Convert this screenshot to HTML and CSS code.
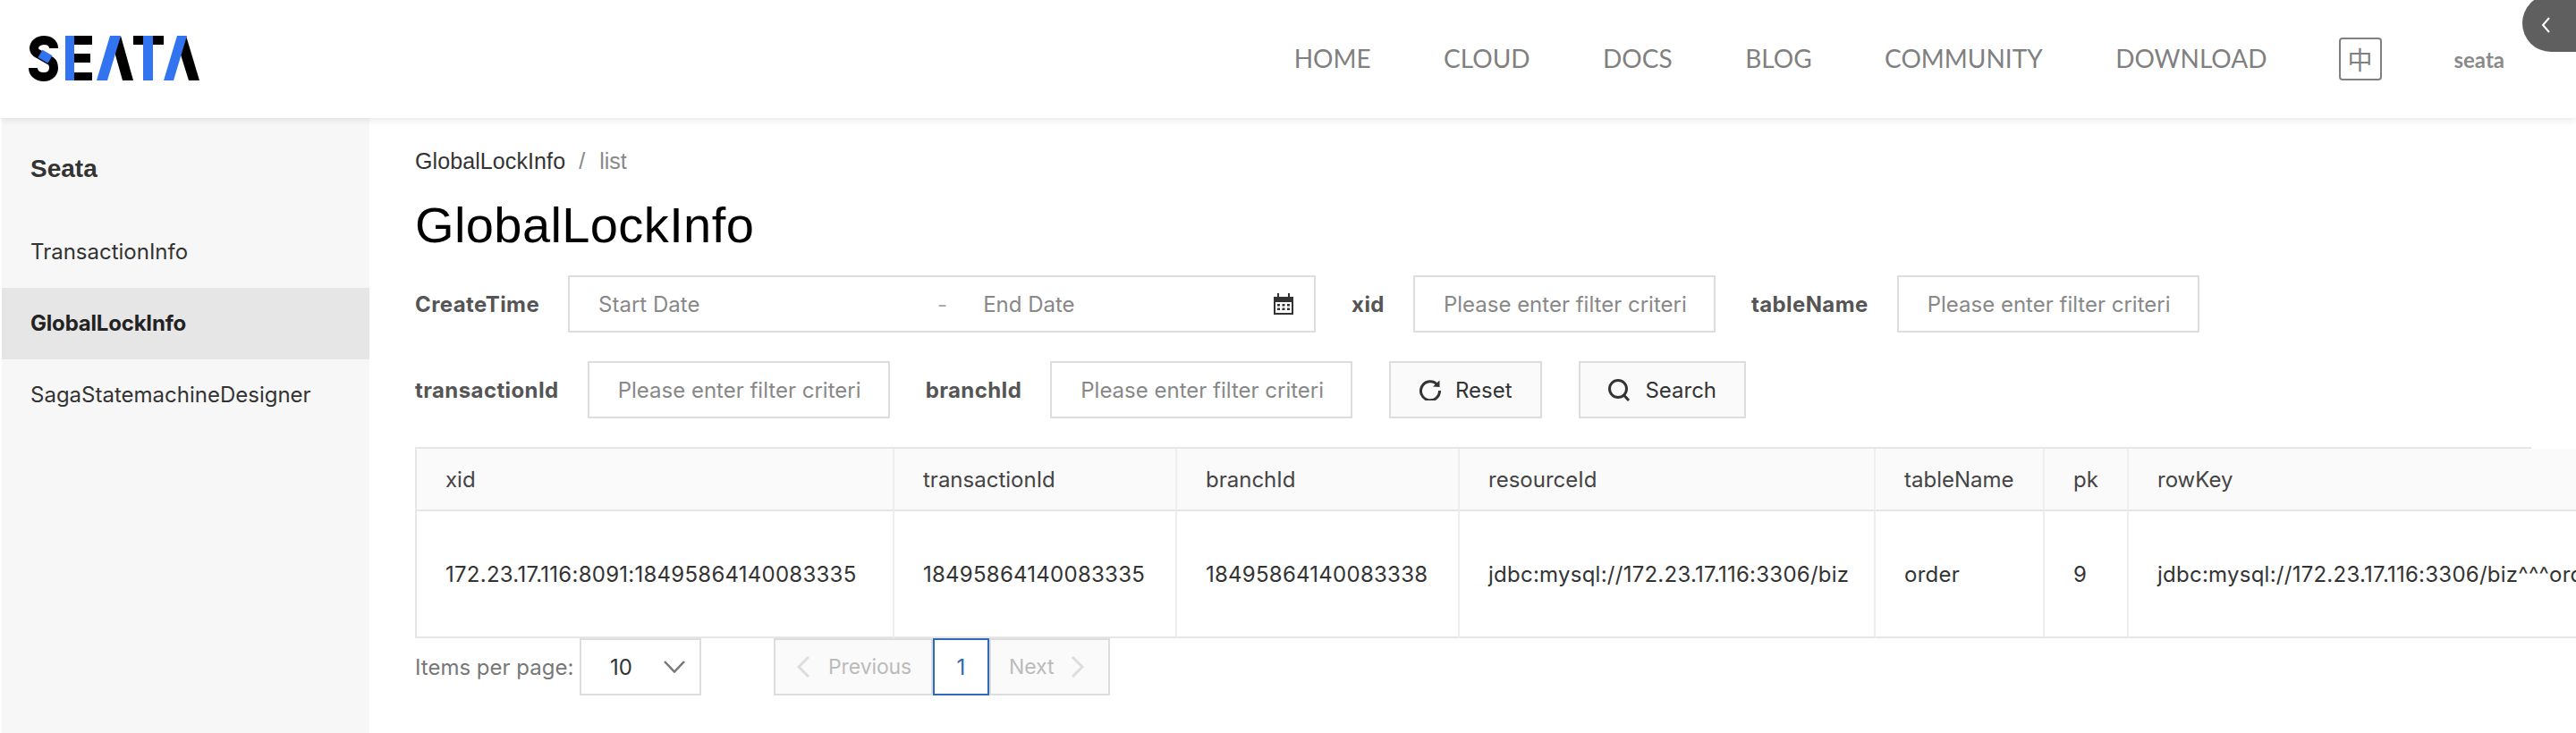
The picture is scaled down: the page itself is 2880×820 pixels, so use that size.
FILE: index.html
```html
<!DOCTYPE html>
<html lang="en">
<head>
	<meta charset="UTF-8">
	<title>Seata</title>
	<link rel="stylesheet" href="styles.css">
</head>
<body>
	<header class="header">
		<a class="logo" href="javascript:;" aria-label="Seata">
			<svg width="192" height="51" viewBox="0 0 192 51">
				<path class="logo-s" d="M28 14C28 8 23 5 17 5C11 5 6 9 6 14C6 17 8 19 11 20.5L25 28.500C27 30 28 32 28 36C28 42 23 46 17 46C10 46 5 42 5 36"/>
				<path class="logo-blue-line" d="M13 20L24 26.500"/>
				<path class="logo-black" d="M51 0H71V10H51ZM51 20H69V30H51ZM51 41H71V50H51Z"/>
				<path class="logo-blue" d="M41 0H51V50H41Z"/>
				<path class="logo-black" d="M103 0L117 50H105L96 18Z"/>
				<path class="logo-blue" d="M91 0H103L88 50H76Z"/>
				<path class="logo-black" d="M117 0H151V10H117Z"/>
				<path class="logo-blue" d="M128 0H139V50H128Z"/>
				<path class="logo-black" d="M176 0L191 50H179L169 18Z"/>
				<path class="logo-blue" d="M166 0H177L162 50H151Z"/>
			</svg>
		</a>
		<nav class="nav">
			<a href="javascript:;">HOME</a>
			<a href="javascript:;">CLOUD</a>
			<a href="javascript:;">DOCS</a>
			<a href="javascript:;">BLOG</a>
			<a href="javascript:;">COMMUNITY</a>
			<a href="javascript:;">DOWNLOAD</a>
		</nav>
		<span class="lang">中</span>
		<span class="user">seata</span>
		<div class="toggle">
			<svg width="10" height="18" viewBox="0 0 10 18"><path d="M9 1L2 9L9 17"/></svg>
		</div>
	</header>
	<div class="layout">
		<aside class="sidebar">
			<h2 class="side-title">Seata</h2>
			<ul class="menu">
				<li>TransactionInfo</li>
				<li class="active">GlobalLockInfo</li>
				<li>SagaStatemachineDesigner</li>
			</ul>
		</aside>
		<main class="main">
			<div class="crumb"><a href="javascript:;">GlobalLockInfo</a><i>/</i><span>list</span></div>
			<h1 class="title">GlobalLockInfo</h1>
			<div class="form-row">
				<label>CreateTime</label>
				<div class="box date-box">
					<span class="date-start">Start Date</span>
					<span class="date-sep">-</span>
					<span class="date-end">End Date</span>
					<svg class="calendar" width="24" height="24" viewBox="0 0 24 24">
						<path class="cal-body" d="M1 4H23V24H1ZM3 10V22H21V10Z"/>
						<path class="cal-body" d="M5 0H7V4H5ZM17 0H19V4H17ZM5 12H8V14.500H5ZM10.500 12H13.500V14.500H10.500ZM16 12H19V14.500H16ZM5 16.500H8V19H5ZM10.500 16.500H13.500V19H10.500ZM16 16.500H19V19H16Z"/>
					</svg>
				</div>
				<label>xid</label>
				<div class="box">Please enter filter criteri</div>
				<label>tableName</label>
				<div class="box">Please enter filter criteri</div>
			</div>
			<div class="form-row">
				<label>transactionId</label>
				<div class="box">Please enter filter criteri</div>
				<label>branchId</label>
				<div class="box">Please enter filter criteri</div>
				<button class="btn btn-reset">
					<svg width="24" height="24" viewBox="0 0 24 24"><path class="ico" d="M20 6.500A10.500 10.500 0 1 0 22.500 13"/><path class="ico-fill" d="M15 8.500L22.500 9V1.500Z"/></svg>
					Reset
				</button>
				<button class="btn btn-search">
					<svg width="25" height="25" viewBox="0 0 25 25"><circle class="ico" cx="11" cy="11" r="9.500"/><path class="ico" d="M17.500 18L23 24"/></svg>
					Search
				</button>
			</div>
			<div class="table-wrap">
				<table class="table">
					<colgroup>
						<col class="c-xid"><col class="c-id"><col class="c-id"><col class="c-res"><col class="c-name"><col class="c-pk"><col class="c-key">
					</colgroup>
					<thead>
						<tr>
							<th>xid</th>
							<th>transactionId</th>
							<th>branchId</th>
							<th>resourceId</th>
							<th>tableName</th>
							<th>pk</th>
							<th>rowKey</th>
						</tr>
					</thead>
					<tbody>
						<tr>
							<td>172.23.17.116:8091:18495864140083335</td>
							<td>18495864140083335</td>
							<td>18495864140083338</td>
							<td>jdbc:mysql://172.23.17.116:3306/biz</td>
							<td>order</td>
							<td>9</td>
							<td>jdbc:mysql://172.23.17.116:3306/biz^^^order^^^9</td>
						</tr>
					</tbody>
				</table>
			</div>
			<div class="pager-row">
				<span class="per-label">Items per page:</span>
				<div class="select">
					<span>10</span>
					<svg width="24" height="14" viewBox="0 0 24 14"><path d="M1 1L12 12.500L23 1"/></svg>
				</div>
				<div class="pager">
					<span class="page-btn page-prev">
						<svg width="14" height="24" viewBox="0 0 14 24"><path d="M13 1L2 12L13 23"/></svg>
						Previous
					</span>
					<span class="page-cur">1</span>
					<span class="page-btn page-next">
						Next
						<svg width="14" height="24" viewBox="0 0 14 24"><path d="M1 1L12 12L1 23"/></svg>
					</span>
				</div>
			</div>
		</main>
	</div>
</body>
</html>
```

FILE: styles.css
```css
html, body {
	height: 820px;
	overflow: hidden;
}
body {
	margin: 0;
	background: #fff;
	color: #333;
	font-size: 24px;
	font-family: "Inter", "Liberation Sans", "Noto Sans CJK SC", sans-serif;
}
a {
	color: inherit;
	text-decoration: none;
}
ul {
	padding: 0;
	margin: 0;
	list-style: none;
}
.header {
	position: relative;
	z-index: 2;
	display: flex;
	align-items: center;
	height: 132px;
	padding-left: 32px;
	background: #fff;
	box-shadow: 0 2px 8px rgba(0,0,0,.1);
}
.logo {
	display: flex;
	margin-top: -2px;
}
.logo-s {
	fill: none;
	stroke: #000;
	stroke-width: 10;
}
.logo-blue-line {
	fill: none;
	stroke: #3273f0;
	stroke-width: 10;
}
.logo-black {
	fill: #000;
}
.logo-blue {
	fill: #3273f0;
}
.nav {
	display: flex;
	gap: 81.500px;
	margin: -2px 0 0 auto;
	font-family: "Lato", sans-serif;
	font-size: 28px;
	color: #808080;
}
.lang {
	display: flex;
	align-items: center;
	justify-content: center;
	box-sizing: border-box;
	width: 48px;
	height: 48px;
	margin-left: 80px;
	border: 2px solid #808080;
	border-radius: 4px;
	color: #808080;
	font-size: 28px;
	font-family: "Noto Sans CJK SC", sans-serif;
}
.user {
	margin: 0 80px 0 81px;
	color: #8a8a8a;
	font-family: "Lato", sans-serif;
	font-size: 24px;
	font-weight: 700;
}
.toggle {
	position: absolute;
	top: -6px;
	right: 0;
	display: flex;
	align-items: center;
	width: 60px;
	height: 64px;
	padding-top: 4px;
	box-sizing: border-box;
	padding-left: 21px;
	background: #5f5f5f;
	border-radius: 32px 0 0 32px;
}
.toggle path {
	fill: none;
	stroke: #fff;
	stroke-width: 2;
}
.layout {
	display: flex;
	height: 688px;
}
.sidebar {
	flex: none;
	width: 411px;
	margin-left: 2px;
	background: #f7f7f7;
}
.side-title {
	margin: 0;
	padding: 41px 32px 37px;
	color: #333;
	font-family: "Liberation Sans", sans-serif;
	font-size: 28px;
	font-weight: 700;
	line-height: 32px;
}
.menu li {
	height: 80px;
	padding-left: 32px;
	line-height: 80px;
}
.menu .active {
	background: #e6e6e6;
	color: #222;
	font-weight: 700;
	letter-spacing: -.2px;
}
.main {
	flex: 1;
	min-width: 0;
	padding: 32px 0 0 51px;
	overflow: hidden;
}
.crumb {
	display: flex;
	height: 32px;
	align-items: center;
	font-family: "Liberation Sans", sans-serif;
	font-size: 25px;
}
.crumb i {
	margin: 0 15px;
	color: #888;
	font-style: normal;
}
.crumb a {
	letter-spacing: .1px;
}
.crumb span {
	margin-left: 1px;
	color: #888;
}
.title {
	margin: 0 0 24px;
	color: #000;
	font-family: "Liberation Sans", sans-serif;
	font-size: 56px;
	font-weight: 400;
	line-height: 64px;
	letter-spacing: .4px;
	padding-top: 24px;
}
.form-row {
	display: flex;
	align-items: center;
	height: 64px;
	margin-bottom: 32px;
}
.form-row label {
	margin: 0 32px 0 40px;
	color: #555;
	font-weight: 700;
	letter-spacing: .4px;
}
.form-row label:first-child {
	margin-left: 0;
}
.box {
	display: flex;
	align-items: center;
	box-sizing: border-box;
	width: 338px;
	height: 64px;
	padding: 0 32px;
	border: 2px solid #ddd;
	color: #888;
	white-space: nowrap;
	overflow: hidden;
}
.date-box {
	width: 836px;
}
.date-sep {
	margin: 0 40px 0 0;
	color: #aaa;
}
.date-start {
	width: 379px;
}
.calendar {
	margin-left: auto;
	margin-right: -10px;
}
.cal-body {
	fill: #333;
	fill-rule: evenodd;
}
.btn {
	display: flex;
	align-items: center;
	justify-content: center;
	gap: 16px;
	box-sizing: border-box;
	height: 64px;
	margin-left: 41px;
	padding: 0;
	border: 2px solid #ddd;
	background: #fafafa;
	color: #333;
	font: inherit;
}
.btn-reset {
	width: 171px;
}
.btn-search {
	width: 187px;
}
.ico {
	fill: none;
	stroke: #333;
	stroke-width: 3;
}
.ico-fill {
	fill: #333;
}
.table-wrap {
	width: 2366px;
	border-top: 2px solid #e6e6e6;
}
.table {
	table-layout: fixed;
	width: 2800px;
	border-collapse: separate;
	border-spacing: 0;
	border-left: 2px solid #e6e6e6;
}
.c-xid {
	width: 534px;
}
.c-id {
	width: 316px;
}
.c-res {
	width: 465px;
}
.c-name {
	width: 189px;
}
.c-pk {
	width: 94px;
}
.table th, .table td {
	box-sizing: border-box;
	padding: 0 32px;
	border-right: 2px solid #eee;
	text-align: left;
	font-weight: 400;
	white-space: nowrap;
}
.table th {
	height: 70px;
	background: #fafafa;
	border-bottom: 2px solid #e6e6e6;
	color: #444;
}
.table td {
	height: 142px;
	border-bottom: 2px solid #e6e6e6;
	letter-spacing: .25px;
}
.pager-row {
	display: flex;
	align-items: center;
	height: 64px;
}
.per-label {
	width: 184px;
	color: #777;
}
.select {
	display: flex;
	align-items: center;
	justify-content: space-between;
	box-sizing: border-box;
	width: 136px;
	height: 64px;
	padding: 0 16px 0 32px;
	border: 2px solid #ddd;
}
.select path {
	fill: none;
	stroke: #777;
	stroke-width: 2.500;
}
.pager {
	display: flex;
	height: 64px;
	margin-left: 81px;
}
.page-btn {
	display: flex;
	align-items: center;
	box-sizing: border-box;
	border: 2px solid #ddd;
	background: #fafafa;
	color: #bbb;
	font-size: 23px;
	letter-spacing: -.1px;
}
.page-prev {
	width: 178px;
	gap: 21px;
	padding-left: 24px;
}
.page-next {
	width: 135px;
	gap: 20px;
	padding-left: 20px;
}
.page-btn path {
	fill: none;
	stroke: #ddd;
	stroke-width: 3;
}
.page-cur {
	display: flex;
	align-items: center;
	justify-content: center;
	box-sizing: border-box;
	width: 63px;
	border: 2px solid #2e6ab8;
	color: #2e6ab8;
}
```
